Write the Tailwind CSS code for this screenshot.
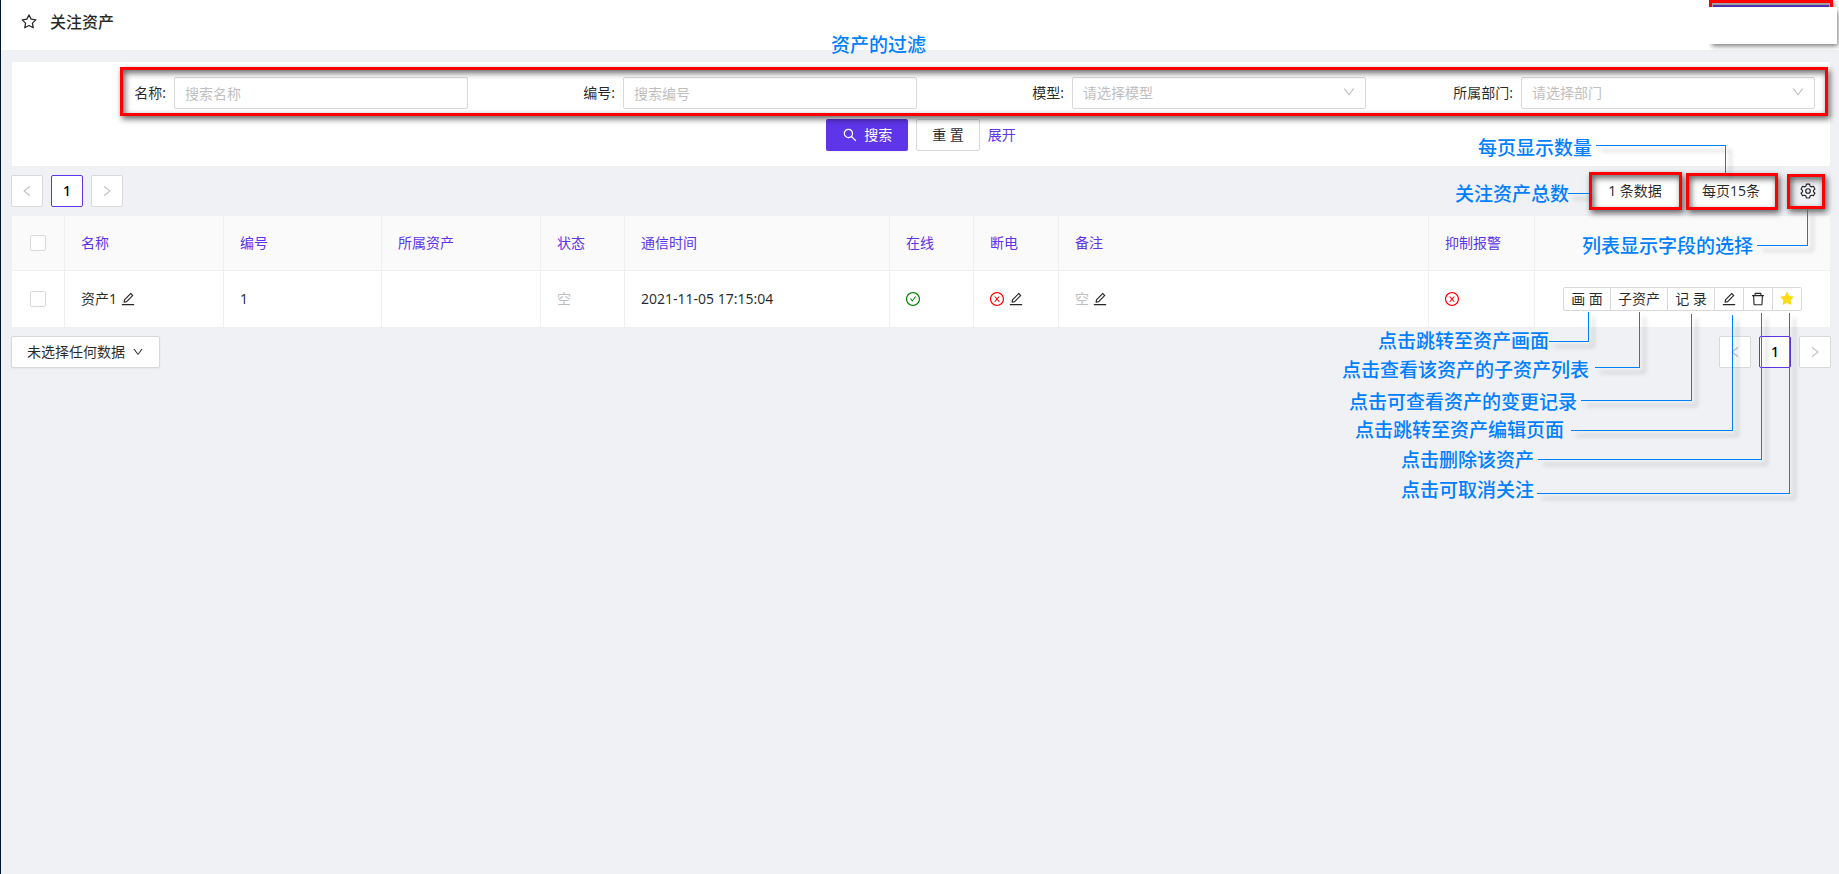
<!DOCTYPE html>
<html lang="zh-CN">
<head>
<meta charset="utf-8">
<title>关注资产</title>
<script src="https://cdn.jsdelivr.net/npm/@tailwindcss/browser@4"></script>
</head>
<body class="relative min-h-screen overflow-x-hidden border-l border-[#001529] bg-[#f0f1f5] font-['Noto_Sans','Noto_Sans_CJK_SC',sans-serif] text-sm text-black/85">
<svg class="hidden" aria-hidden="true">
  <symbol id="left" viewBox="0 0 1024 1024"><path d="M724 218.300V141c0-6.700-7.700-10.400-12.900-6.300L260.300 486.800a31.860 31.860 0 0 0 0 50.300l450.800 352.100c5.300 4.100 12.900.4 12.900-6.300v-77.300c0-4.900-2.300-9.600-6.100-12.600l-360-281 360-281.100c3.800-3 6.100-7.700 6.100-12.600z"/></symbol>
  <symbol id="right" viewBox="0 0 1024 1024"><path d="M765.700 486.800L314.900 134.700A7.970 7.970 0 0 0 302 141v77.300c0 4.900 2.300 9.600 6.100 12.600l360 281.100-360 281.100c-3.900 3-6.100 7.700-6.100 12.600V883c0 6.700 7.700 10.400 12.900 6.300l450.800-352.100a31.960 31.960 0 0 0 0-50.400z"/></symbol>
  <symbol id="down" viewBox="0 0 1024 1024"><path d="M884 256h-75c-5.100 0-9.900 2.500-12.900 6.600L512 654.200 227.900 262.600c-3-4.100-7.800-6.600-12.900-6.600h-75c-6.500 0-10.300 7.400-6.500 12.700l352.600 486.100c12.800 17.600 39 17.600 51.700 0l352.600-486.100c3.900-5.300.1-12.700-6.400-12.700z"/></symbol>
  <symbol id="edit" viewBox="0 0 1024 1024"><path d="M257.700 752c2 0 4-.2 6-.5L431.900 722c2-.4 3.900-1.300 5.300-2.800l423.900-423.900a9.960 9.960 0 0 0 0-14.100L694.900 114.900c-1.900-1.900-4.400-2.900-7.100-2.900s-5.200 1-7.100 2.900L256.800 538.800c-1.500 1.500-2.400 3.300-2.800 5.300l-29.500 168.200a33.500 33.500 0 0 0 9.400 29.800c6.600 6.400 14.900 9.900 23.800 9.900zm67.400-174.400L687.800 215l73.300 73.300-362.700 362.600-88.900 15.700 15.600-89zM880 836H144c-17.700 0-32 14.300-32 32v36c0 4.400 3.600 8 8 8h784c4.400 0 8-3.600 8-8v-36c0-17.700-14.300-32-32-32z"/></symbol>
  <symbol id="trash" viewBox="0 0 1024 1024"><path d="M360 184h-8c4.400 0 8-3.600 8-8v8h304v-8c0 4.400 3.600 8 8 8h-8v72h72v-80c0-35.300-28.700-64-64-64H352c-35.300 0-64 28.700-64 64v80h72v-72zm504 72H160c-17.700 0-32 14.300-32 32v32c0 4.400 3.600 8 8 8h60.400l24.700 523c1.600 34.100 29.800 61 63.900 61h454c34.200 0 62.300-26.800 63.900-61l24.700-523H888c4.400 0 8-3.600 8-8v-32c0-17.700-14.300-32-32-32zM731.300 840H292.700l-24.200-512h487l-24.200 512z"/></symbol>
  <symbol id="ring" viewBox="0 0 1024 1024"><path d="M512 64C264.600 64 64 264.600 64 512s200.600 448 448 448 448-200.600 448-448S759.400 64 512 64zm0 820c-205.400 0-372-166.600-372-372s166.600-372 372-372 372 166.600 372 372-166.600 372-372 372z"/></symbol>
  <symbol id="check" viewBox="0 0 1024 1024"><use href="#ring"/><path d="M699 353h-46.900c-10.200 0-19.900 4.900-25.900 13.300L469 584.300l-71.200-98.800c-6-8.300-15.600-13.300-25.900-13.300H325c-6.500 0-10.300 7.400-6.500 12.700l124.600 172.800a31.800 31.800 0 0 0 51.700 0l210.600-292c3.900-5.300.1-12.700-6.400-12.700z"/></symbol>
  <symbol id="cross" viewBox="0 0 1024 1024"><use href="#ring"/><path d="M685.400 354.800c0-4.400-3.600-8-8-8l-66 .3L512 465.600l-99.300-118.400-66.100-.3c-4.400 0-8 3.500-8 8 0 1.900.7 3.700 1.900 5.200l130.100 155L340.500 670a8.320 8.320 0 0 0-1.900 5.200c0 4.400 3.600 8 8 8l66.100-.3L512 564.400l99.300 118.400 66 .3c4.400 0 8-3.500 8-8 0-1.900-.7-3.700-1.900-5.200L553.500 515l130.100-155c1.200-1.400 1.800-3.300 1.800-5.200z"/></symbol>
  <symbol id="search" viewBox="0 0 1024 1024"><path d="M909.600 854.500L649.900 594.800C690.200 542.700 712 479 712 412c0-80.200-31.300-155.400-87.900-212.100-56.600-56.700-132-87.900-212.100-87.900s-155.500 31.300-212.100 87.900C143.200 256.500 112 331.800 112 412c0 80.100 31.300 155.500 87.900 212.100C256.500 680.800 331.800 712 412 712c67 0 130.600-21.800 182.700-62l259.700 259.600a8.200 8.200 0 0 0 11.600 0l43.600-43.500a8.200 8.200 0 0 0 0-11.600zM570.400 570.400C528 612.700 471.800 636 412 636s-116-23.300-158.400-65.600C211.300 528 188 471.800 188 412s23.300-116.100 65.600-158.400C296 211.300 352.200 188 412 188s116.100 23.200 158.400 65.600S636 352.200 636 412s-23.300 116.100-65.600 158.400z"/></symbol>
  <symbol id="star" viewBox="0 0 1024 1024"><path d="M908.100 353.100l-253.900-36.900L540.700 86.100c-3.100-6.300-8.200-11.400-14.500-14.500-15.800-7.800-35-1.300-42.900 14.500L369.800 316.200l-253.900 36.900c-7 1-13.400 4.300-18.300 9.300a32.050 32.050 0 0 0 .6 45.300l183.700 179.100-43.400 252.900a31.950 31.950 0 0 0 46.400 33.700L512 754l227.100 119.400c6.200 3.300 13.400 4.400 20.300 3.200 17.400-3 29.100-19.500 26.100-36.900l-43.400-252.900 183.700-179.100c5-4.900 8.300-11.300 9.300-18.300 2.700-17.500-9.500-33.700-27-36.300z"/></symbol>
</svg>

<div class="absolute top-[110px] -left-px h-10 w-px bg-[#5e35e8]"></div>

<header class="flex h-[50px] items-center bg-white pb-1.5 pl-[19px]">
  <svg class="mr-3 size-[18px]" viewBox="0 0 1024 1024" fill="none" stroke="currentColor" stroke-width="72" stroke-linejoin="round"><path d="M512 110L635 350L900 390L708 577L753 840L512 714L271 840L316 577L124 390L389 350Z"/></svg>
  <h1 class="text-base font-medium">关注资产</h1>
</header>

<main class="flex flex-col gap-2 pt-[11px] pr-2 pl-2.5">
  <form class="flex flex-col gap-2.5 border border-[#f0f0f0] bg-white p-[15px]">
    <div class="grid grid-cols-4 gap-2">
      <div class="flex items-center">
        <label for="name" class="w-1/3 pr-2 text-right">名称:</label>
        <input id="name" placeholder="搜索名称" class="h-8 w-2/3 rounded-xs border border-[#d9d9d9] bg-white px-2.5 placeholder:text-[#bfbfbf]">
      </div>
      <div class="flex items-center">
        <label for="code" class="w-1/3 pr-2 text-right">编号:</label>
        <input id="code" placeholder="搜索编号" class="h-8 w-2/3 rounded-xs border border-[#d9d9d9] bg-white px-2.5 placeholder:text-[#bfbfbf]">
      </div>
      <div class="flex items-center">
        <label for="model" class="w-1/3 pr-2 text-right">模型:</label>
        <div class="relative w-2/3">
          <select id="model" class="h-8 w-full appearance-none rounded-xs border border-[#d9d9d9] bg-white px-2.5 text-[#bfbfbf]"><option>请选择模型</option></select>
          <svg class="pointer-events-none absolute top-2 right-2.5 size-3.5 fill-[#bfbfbf]"><use href="#down"/></svg>
        </div>
      </div>
      <div class="flex items-center">
        <label for="dept" class="w-1/3 pr-2 text-right">所属部门:</label>
        <div class="relative w-2/3">
          <select id="dept" class="h-8 w-full appearance-none rounded-xs border border-[#d9d9d9] bg-white px-2.5 text-[#bfbfbf]"><option>请选择部门</option></select>
          <svg class="pointer-events-none absolute top-2 right-2.5 size-3.5 fill-[#bfbfbf]"><use href="#down"/></svg>
        </div>
      </div>
    </div>
    <div class="flex items-center justify-center gap-2">
      <button type="submit" class="flex h-8 items-center gap-1.5 rounded-xs bg-[#5e35e8] px-4 text-white shadow-xs"><svg class="size-4 fill-white"><use href="#search"/></svg>搜索</button>
      <button type="reset" class="h-8 rounded-xs border border-[#d9d9d9] bg-white px-[15px]">重 置</button>
      <a href="#" class="text-[#5e35e8]">展开</a>
    </div>
  </form>

  <div class="flex h-8 items-center justify-between">
    <nav class="flex gap-2" aria-label="分页">
      <button class="grid size-8 place-items-center rounded-xs border border-[#d9d9d9] bg-white" aria-label="上一页"><svg class="size-3.5 fill-[#bfbfbf]"><use href="#left"/></svg></button>
      <button class="size-8 rounded-xs border border-[#5e35e8] bg-white font-medium text-black">1</button>
      <button class="grid size-8 place-items-center rounded-xs border border-[#d9d9d9] bg-white" aria-label="下一页"><svg class="size-3.5 fill-[#bfbfbf]"><use href="#right"/></svg></button>
    </nav>
    <div class="flex items-center">
      <span class="mr-2 flex h-8 w-[88px] items-center justify-center bg-white">1 条数据</span>
      <button class="mr-2.5 h-8 w-[88px] bg-white">每页15条</button>
      <button class="grid h-8 w-[46px] place-items-center" aria-label="列设置"><svg class="size-4" viewBox="0 0 14 14" fill="none" stroke="currentColor" stroke-linejoin="round"><path d="M5.600 1h2.800l.4 1.700 1.200.7 1.700-.5 1.400 2.400-1.300 1.200v1.200l1.300 1.200-1.400 2.300-1.700-.5-1.200.7-.4 1.700H5.600l-.4-1.700-1.200-.7-1.700.5L.9 8.900l1.300-1.200V6.500L.9 5.300l1.400-2.400 1.700.5 1.200-.7z"/><circle cx="7" cy="7" r="2"/></svg></button>
    </div>
  </div>

  <table class="w-full table-fixed border-separate border-spacing-0 border border-[#f0f0f0] bg-white text-left">
    <colgroup>
      <col class="w-[53px]"><col class="w-[159px]"><col class="w-[158px]"><col class="w-[159px]"><col class="w-[84px]"><col class="w-[265px]"><col class="w-[84px]"><col class="w-[85px]"><col><col class="w-[106px]"><col class="w-[295px]">
    </colgroup>
    <thead>
      <tr class="h-[55px] bg-[#fafafa] text-[#5e35e8] *:border-b *:border-[#f0f0f0] *:px-4 *:font-normal [&>*:not(:last-child)]:border-r">
        <td><input type="checkbox" aria-label="全选" class="mx-0.5 block size-4 appearance-none rounded-xs border border-[#d9d9d9] bg-white"></td>
        <th>名称</th><th>编号</th><th>所属资产</th><th>状态</th><th>通信时间</th><th>在线</th><th>断电</th><th>备注</th><th>抑制报警</th><td></td>
      </tr>
    </thead>
    <tbody>
      <tr class="h-14 *:border-[#f0f0f0] *:px-4 [&>*:not(:last-child)]:border-r">
        <td><input type="checkbox" aria-label="选择资产1" class="mx-0.5 block size-4 appearance-none rounded-xs border border-[#d9d9d9] bg-white"></td>
        <td><div class="flex items-center gap-[3px]">资产1<button aria-label="编辑名称"><svg class="size-4 fill-current"><use href="#edit"/></svg></button></div></td>
        <td>1</td>
        <td></td>
        <td class="text-[#bfbfbf]">空</td>
        <td>2021-11-05 17:15:04</td>
        <td><svg class="-ml-px size-4 fill-[#008000]"><use href="#check"/></svg></td>
        <td><div class="-ml-px flex items-center gap-[3px]"><svg class="size-4 fill-[#ff0000]"><use href="#cross"/></svg><button aria-label="编辑断电"><svg class="size-4 fill-current"><use href="#edit"/></svg></button></div></td>
        <td><div class="flex items-center gap-[3px]"><span class="text-[#bfbfbf]">空</span><button aria-label="编辑备注"><svg class="size-4 fill-current"><use href="#edit"/></svg></button></div></td>
        <td><svg class="-ml-px size-4 fill-[#ff0000]"><use href="#cross"/></svg></td>
        <td>
          <div class="flex justify-center -space-x-px *:grid *:h-6 *:place-items-center *:border *:border-[#d9d9d9] *:bg-white">
            <button class="w-12 rounded-l-xs">画 面</button>
            <button class="w-[58px]">子资产</button>
            <button class="w-12">记 录</button>
            <button class="w-[30px]" aria-label="编辑"><svg class="size-4 fill-current"><use href="#edit"/></svg></button>
            <button class="w-[30px]" aria-label="删除"><svg class="size-4 fill-current"><use href="#trash"/></svg></button>
            <button class="w-[30px] rounded-r-xs" aria-label="取消关注"><svg class="size-4 fill-[#fadb14]"><use href="#star"/></svg></button>
          </div>
        </td>
      </tr>
    </tbody>
  </table>

  <div class="flex items-center justify-between">
    <button class="flex h-8 items-center gap-[7px] rounded-xs border border-[#d9d9d9] bg-white px-[15px] shadow-xs">未选择任何数据<svg class="size-3 fill-current"><use href="#down"/></svg></button>
    <nav class="flex gap-2" aria-label="底部分页">
      <button class="grid size-8 place-items-center rounded-xs border border-[#d9d9d9] bg-white" aria-label="上一页"><svg class="size-3.5 fill-[#bfbfbf]"><use href="#left"/></svg></button>
      <button class="size-8 rounded-xs border border-[#5e35e8] bg-white font-medium text-black">1</button>
      <button class="grid size-8 place-items-center rounded-xs border border-[#d9d9d9] bg-white" aria-label="下一页"><svg class="size-3.5 fill-[#bfbfbf]"><use href="#right"/></svg></button>
    </nav>
  </div>
</main>

<!-- Callouts drawn over the page, anchored to its right edge -->
<div class="pointer-events-none absolute top-0 right-0 h-[520px] w-[1839px] text-[19px]/6 font-medium whitespace-nowrap text-[#007fff]">
  <div class="absolute top-0 left-[1709px] h-[7px] w-[124px] border-x-3 border-t-3 border-[#ff0000] bg-[#a0a0a0] px-px pt-[2px] shadow-[2px_2px_4px_#0006]"><div class="h-[2px] bg-[#5030b0]"></div></div>
  <div class="absolute top-[7px] left-[1709px] h-[37px] w-32 bg-white shadow-[2px_3px_5px_-1px_#0008]"></div>
  <div class="absolute top-[7px] left-[1700px] h-[37px] w-[137px] bg-white"></div>

  <div class="absolute top-[67px] left-[120px] h-[49px] w-[1708px] border-3 border-[#ff0000] shadow-[2px_3px_6px_#0009,inset_2px_3px_6px_#0009]"></div>
  <div class="absolute top-[172px] left-[1589px] h-[38px] w-[93px] border-3 border-[#ff0000] shadow-[2px_3px_6px_#0009,inset_2px_3px_6px_#0009]"></div>
  <div class="absolute top-[173px] left-[1686px] h-[37px] w-[92px] border-3 border-[#ff0000] shadow-[2px_3px_6px_#0009,inset_2px_3px_6px_#0009]"></div>
  <div class="absolute top-[174px] left-[1787px] h-[35px] w-[38px] border-3 border-[#ff0000] shadow-[2px_3px_6px_#0009,inset_2px_3px_6px_#0009]"></div>

  <svg class="absolute inset-0 size-full drop-shadow-[5px_5px_2px_#0005]" fill="none" stroke="#007fff" shape-rendering="crispEdges">
    <path d="M1595.500 145.500H1725.500V174M1568 193.500H1589M1757 245.500H1807.500V209M1549 341.500H1588.500V312M1595 367.500H1639.500V312M1581 400.500H1691.500V314M1571 430.500H1732.500V315M1538 459.500H1761.500V313M1537 493.500H1789.500V313"/>
  </svg>

  <p class="absolute top-[33px] left-[831px]">资产的过滤</p>
  <p class="absolute top-[136px] left-[1478px]">每页显示数量</p>
  <p class="absolute top-[182px] left-[1455px]">关注资产总数</p>
  <p class="absolute top-[234px] left-[1582px]">列表显示字段的选择</p>
  <p class="absolute top-[329px] left-[1378px]">点击跳转至资产画面</p>
  <p class="absolute top-[358px] left-[1342px]">点击查看该资产的子资产列表</p>
  <p class="absolute top-[390px] left-[1349px]">点击可查看资产的变更记录</p>
  <p class="absolute top-[418px] left-[1355px]">点击跳转至资产编辑页面</p>
  <p class="absolute top-[448px] left-[1401px]">点击删除该资产</p>
  <p class="absolute top-[478px] left-[1401px]">点击可取消关注</p>
</div>
</body>
</html>
